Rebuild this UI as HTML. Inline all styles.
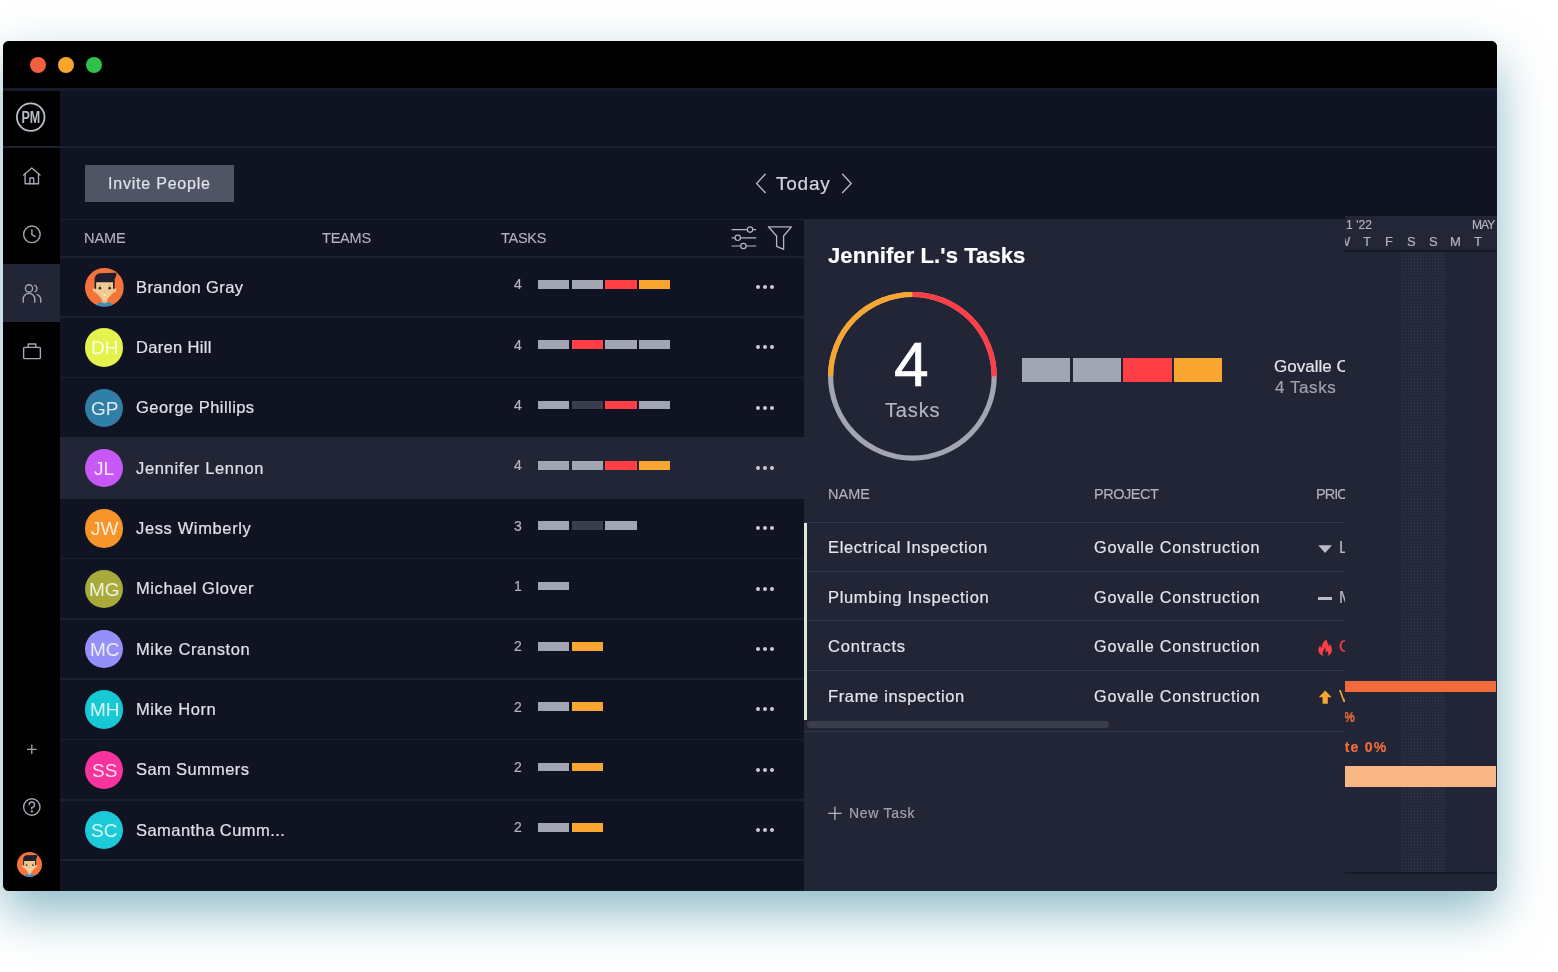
<!DOCTYPE html>
<html lang="en"><head><meta charset="utf-8"><title>Team Workload</title>
<style>
html,body{margin:0;padding:0}
body{width:1558px;height:972px;background:#fff;overflow:hidden;position:relative;font-family:"Liberation Sans", sans-serif}
.abs{position:absolute}
.clip{overflow:hidden}
.t{position:absolute;white-space:pre;line-height:1;font-family:"Liberation Sans", sans-serif;will-change:transform;-webkit-text-stroke:.2px}
.shadow{position:absolute;left:3px;top:41px;width:1494px;height:850px;border-radius:6px;box-shadow:0 21px 50px rgba(62,140,160,.6)}
.win{position:absolute;left:3px;top:41px;width:1494px;height:850px;border-radius:6px;overflow:hidden;background:#101422}
.stage{position:absolute;left:-3px;top:-41px;width:1558px;height:972px}
.wk{background-color:#252838;background-image:radial-gradient(#343747 0.7px,transparent 0.9px);background-size:3px 3px}
</style></head>
<body>
<div class="shadow"></div>
<div class="win"><div class="stage">
<div class="abs" style="left:0;top:41px;width:1558px;height:48px;background:#000"></div>
<div class="abs" style="left:30px;top:57.2px;width:16px;height:16px;border-radius:50%;background:#f4603f"></div>
<div class="abs" style="left:58px;top:57.2px;width:16px;height:16px;border-radius:50%;background:#f8a52b"></div>
<div class="abs" style="left:86px;top:57.2px;width:16px;height:16px;border-radius:50%;background:#2fc14b"></div>
<div class="abs" style="left:0;top:88.4px;width:1558px;height:2.6px;background:#181b2b"></div>
<div class="abs" style="left:0;top:91px;width:60px;height:810px;background:#000"></div>
<div class="abs" style="left:0;top:146px;width:1558px;height:2px;background:#1d2030"></div>
<div class="abs" style="left:0;top:264px;width:60px;height:58px;background:#222535"></div>
<svg class="abs" style="left:14px;top:100px;will-change:transform" width="34" height="34" viewBox="0 0 34 34"><circle cx="16.7" cy="17.1" r="13.8" fill="none" stroke="#b9bcc9" stroke-width="1.8"/><text x="16.8" y="22.9" text-anchor="middle" font-family="Liberation Sans, sans-serif" font-weight="700" font-size="16" textLength="18.8" lengthAdjust="spacingAndGlyphs" fill="#b9bcc9">PM</text></svg>
<svg class="abs" style="left:21px;top:166px" width="22" height="21" viewBox="0 0 22 21" fill="none" stroke="#a3a6b3" stroke-width="1.4" stroke-linejoin="round" stroke-linecap="round"><path d="M2.6 9 L10.8 2 L19 9"/><path d="M4.1 7.8 V17.8 H17.5 V7.8"/><path d="M8.9 17.8 V12 H12.7 V17.8"/></svg>
<svg class="abs" style="left:21px;top:224px" width="22" height="22" viewBox="0 0 22 22" fill="none" stroke="#a3a6b3" stroke-width="1.4" stroke-linecap="round"><circle cx="10.9" cy="10.3" r="8.3"/><path d="M10.9 5.6 V10.6 L14 12.6"/></svg>
<svg class="abs" style="left:21px;top:283px" width="22" height="21" viewBox="0 0 22 21" fill="none" stroke="#a3a6b3" stroke-width="1.4" stroke-linecap="round"><circle cx="8" cy="5.4" r="3.6"/><path d="M2.2 19.2 V16.2 A5.8 5.8 0 0 1 13.8 16.2 V19.2"/><path d="M13.6 2.2 A3.6 3.6 0 0 1 14 8.8"/><path d="M16.2 11.6 A5.6 5.6 0 0 1 19.8 16.6 V19.2"/></svg>
<svg class="abs" style="left:21px;top:342px" width="22" height="19" viewBox="0 0 22 19" fill="none" stroke="#a3a6b3" stroke-width="1.4" stroke-linejoin="round"><rect x="2.6" y="5.4" width="16.8" height="11.2" rx="1"/><path d="M7.2 5.4 V2 H14.8 V5.4"/></svg>
<svg class="abs" style="left:25px;top:743px" width="14" height="14" viewBox="0 0 14 14" fill="none" stroke="#a3a6b3" stroke-width="1.3"><path d="M6.8 1.6 V11 M2 6.3 H11.6"/></svg>
<svg class="abs" style="left:21px;top:796px" width="22" height="22" viewBox="0 0 22 22" fill="none" stroke="#a3a6b3" stroke-width="1.4" stroke-linecap="round"><circle cx="10.8" cy="11" r="8.2"/><path d="M8.2 8.6 A2.7 2.7 0 1 1 10.8 11.4 V12.8"/><circle cx="10.8" cy="15.4" r="0.5" fill="#a3a6b3"/></svg>
<svg class="abs" style="left:17.0px;top:852.3px" width="25" height="25" viewBox="0 0 39 39"><defs><clipPath id="fc29x864"><circle cx="19.5" cy="19.5" r="19.5"/></clipPath></defs><g clip-path="url(#fc29x864)"><rect width="39" height="39" fill="#f4743b"/><path d="M10.4 39 Q11.4 35.2 15.8 34.4 H23.6 Q28 35.2 29.2 39Z" fill="#3a8fc0"/><path d="M16.8 30 H22.6 V34.4 Q19.7 36.6 16.8 34.4Z" fill="#e5b681"/><path d="M8.1 20.4 Q7.2 23.4 10.6 25.2 V20.6Z M31.3 20.4 Q32.2 23.4 28.8 25.2 V20.6Z" fill="#f2cb94"/><path d="M10.6 13.6 H28.8 V24.2 L21 32.6 H18.4 L10.6 24.2Z" fill="#f2cb94"/><path d="M9.6 20.8 V11.4 Q10 6.2 14.6 5.2 L30.4 4.7 Q32 4.8 31.6 6.4 Q31.2 9.4 29.8 11.2 V20.8 H28.2 V14.2 H11.2 V20.8Z" fill="#1f1f2e"/><circle cx="15" cy="20.3" r="1.35" fill="#2b2d3c"/><circle cx="24.8" cy="20.3" r="1.35" fill="#2b2d3c"/><path d="M13.4 17.4 H16.6 M23.2 17.4 H26.4" stroke="#d9a97c" stroke-width="0.9"/><path d="M19.7 21.6 V25 H21.2" fill="none" stroke="#e7b583" stroke-width="0.7"/><path d="M17.9 26.4 H21.7 Q19.8 29.2 17.9 26.4Z" fill="#fdf6ee"/></g></svg>
<div class="abs" style="left:84.5px;top:165px;width:149.3px;height:36.7px;background:#505566"></div>
<div class="t" style="top:176px;font-size:16px;color:#e0e1e6;letter-spacing:0.790px;left:108.10px;">Invite People</div>
<svg class="abs" style="left:753px;top:171px" width="16" height="25" viewBox="0 0 16 25" fill="none" stroke="#b4b7c3" stroke-width="1.4"><path d="M12.6 2.8 L3.6 12.4 L12.6 22"/></svg>
<svg class="abs" style="left:839px;top:171px" width="16" height="25" viewBox="0 0 16 25" fill="none" stroke="#b4b7c3" stroke-width="1.4"><path d="M3.2 2.8 L12.2 12.4 L3.2 22"/></svg>
<div class="t" style="top:174px;font-size:19px;color:#d3d5dd;letter-spacing:0.749px;left:776.20px;">Today</div>
<div class="abs" style="left:60px;top:218.6px;width:744px;height:1.5px;background:#1c2030"></div>
<div class="t" style="top:231px;font-size:14.5px;color:#b0b3be;letter-spacing:-0.035px;left:84.30px;-webkit-text-stroke:.12px;">NAME</div>
<div class="t" style="top:231px;font-size:14.5px;color:#b0b3be;letter-spacing:-0.213px;left:322.40px;-webkit-text-stroke:.12px;">TEAMS</div>
<div class="t" style="top:231px;font-size:14.5px;color:#b0b3be;letter-spacing:-0.267px;left:500.80px;-webkit-text-stroke:.12px;">TASKS</div>
<svg class="abs" style="left:730px;top:224px" width="28" height="28" viewBox="0 0 28 28" fill="none" stroke="#b4b7c3" stroke-width="1.2"><path d="M1.6 5.6 H17.3 M22.7 5.6 H26.2"/><circle cx="20" cy="5.6" r="2.7"/><path d="M1.6 13.8 H5.1 M10.5 13.8 H26.2"/><circle cx="7.8" cy="13.8" r="2.7"/><path d="M1.6 22 H10.7 M16.1 22 H26.2"/><circle cx="13.4" cy="22" r="2.7"/></svg>
<svg class="abs" style="left:766px;top:224px" width="28" height="28" viewBox="0 0 28 28" fill="none" stroke="#b4b7c3" stroke-width="1.3" stroke-linejoin="round"><path d="M2.4 2.8 H25.4 L17.6 12 V25.4 L10.6 22.4 V12 Z"/></svg>
<div class="abs" style="left:60px;top:436.8px;width:744px;height:62.5px;background:#222535"></div>
<div class="abs" style="left:60px;top:256.0px;width:744px;height:1.6px;background:#1c2030"></div>
<svg class="abs" style="left:84.8px;top:267.8px" width="38.8" height="38.8" viewBox="0 0 39 39"><defs><clipPath id="fc104x287"><circle cx="19.5" cy="19.5" r="19.5"/></clipPath></defs><g clip-path="url(#fc104x287)"><rect width="39" height="39" fill="#f4743b"/><path d="M10.4 39 Q11.4 35.2 15.8 34.4 H23.6 Q28 35.2 29.2 39Z" fill="#3a8fc0"/><path d="M16.8 30 H22.6 V34.4 Q19.7 36.6 16.8 34.4Z" fill="#e5b681"/><path d="M8.1 20.4 Q7.2 23.4 10.6 25.2 V20.6Z M31.3 20.4 Q32.2 23.4 28.8 25.2 V20.6Z" fill="#f2cb94"/><path d="M10.6 13.6 H28.8 V24.2 L21 32.6 H18.4 L10.6 24.2Z" fill="#f2cb94"/><path d="M9.6 20.8 V11.4 Q10 6.2 14.6 5.2 L30.4 4.7 Q32 4.8 31.6 6.4 Q31.2 9.4 29.8 11.2 V20.8 H28.2 V14.2 H11.2 V20.8Z" fill="#1f1f2e"/><circle cx="15" cy="20.3" r="1.35" fill="#2b2d3c"/><circle cx="24.8" cy="20.3" r="1.35" fill="#2b2d3c"/><path d="M13.4 17.4 H16.6 M23.2 17.4 H26.4" stroke="#d9a97c" stroke-width="0.9"/><path d="M19.7 21.6 V25 H21.2" fill="none" stroke="#e7b583" stroke-width="0.7"/><path d="M17.9 26.4 H21.7 Q19.8 29.2 17.9 26.4Z" fill="#fdf6ee"/></g></svg>
<div class="t" style="top:279px;font-size:16.5px;color:#dfe1e7;letter-spacing:0.388px;left:135.90px;">Brandon Gray</div>
<div class="t" style="top:277px;font-size:14px;color:#b3b6c0;left:513.50px;">4</div>
<div class="abs" style="left:537.6px;top:280.1px;width:31.4px;height:8.7px;background:#a2a6b3"></div>
<div class="abs" style="left:571.7px;top:280.1px;width:31.4px;height:8.7px;background:#a2a6b3"></div>
<div class="abs" style="left:605.4px;top:280.1px;width:31.4px;height:8.7px;background:#ff3e45"></div>
<div class="abs" style="left:638.9px;top:280.1px;width:31.4px;height:8.7px;background:#f8a62f"></div>
<div class="abs" style="left:755.7px;top:284.9px;width:4px;height:4px;border-radius:50%;background:#c9cbd4"></div>
<div class="abs" style="left:763.0px;top:284.9px;width:4px;height:4px;border-radius:50%;background:#c9cbd4"></div>
<div class="abs" style="left:770.3px;top:284.9px;width:4px;height:4px;border-radius:50%;background:#c9cbd4"></div>
<div class="abs" style="left:60px;top:316.3px;width:744px;height:1.6px;background:#1c2030"></div>
<div class="abs" style="left:85.1px;top:328.4px;width:38.4px;height:38.4px;border-radius:50%;background:#e4f24d"></div>
<div class="t" style="top:338px;font-size:19px;color:rgba(255,255,255,.84);left:90.57px;-webkit-text-stroke:0;">DH</div>
<div class="t" style="top:339px;font-size:16.5px;color:#dfe1e7;letter-spacing:0.329px;left:135.90px;">Daren Hill</div>
<div class="t" style="top:338px;font-size:14px;color:#b3b6c0;left:513.50px;">4</div>
<div class="abs" style="left:537.6px;top:340.4px;width:31.4px;height:8.7px;background:#a2a6b3"></div>
<div class="abs" style="left:571.7px;top:340.4px;width:31.4px;height:8.7px;background:#ff3e45"></div>
<div class="abs" style="left:605.4px;top:340.4px;width:31.4px;height:8.7px;background:#a2a6b3"></div>
<div class="abs" style="left:638.9px;top:340.4px;width:31.4px;height:8.7px;background:#a2a6b3"></div>
<div class="abs" style="left:755.7px;top:345.2px;width:4px;height:4px;border-radius:50%;background:#c9cbd4"></div>
<div class="abs" style="left:763.0px;top:345.2px;width:4px;height:4px;border-radius:50%;background:#c9cbd4"></div>
<div class="abs" style="left:770.3px;top:345.2px;width:4px;height:4px;border-radius:50%;background:#c9cbd4"></div>
<div class="abs" style="left:60px;top:376.7px;width:744px;height:1.6px;background:#1c2030"></div>
<div class="abs" style="left:85.1px;top:388.7px;width:38.4px;height:38.4px;border-radius:50%;background:#2f7fa6"></div>
<div class="t" style="top:399px;font-size:19px;color:rgba(255,255,255,.84);left:90.57px;-webkit-text-stroke:0;">GP</div>
<div class="t" style="top:399px;font-size:16.5px;color:#dfe1e7;letter-spacing:0.444px;left:135.90px;">George Phillips</div>
<div class="t" style="top:398px;font-size:14px;color:#b3b6c0;left:513.50px;">4</div>
<div class="abs" style="left:537.6px;top:400.8px;width:31.4px;height:8.7px;background:#a2a6b3"></div>
<div class="abs" style="left:571.7px;top:400.8px;width:31.4px;height:8.7px;background:#3b3e4c"></div>
<div class="abs" style="left:605.4px;top:400.8px;width:31.4px;height:8.7px;background:#ff3e45"></div>
<div class="abs" style="left:638.9px;top:400.8px;width:31.4px;height:8.7px;background:#a2a6b3"></div>
<div class="abs" style="left:755.7px;top:405.6px;width:4px;height:4px;border-radius:50%;background:#c9cbd4"></div>
<div class="abs" style="left:763.0px;top:405.6px;width:4px;height:4px;border-radius:50%;background:#c9cbd4"></div>
<div class="abs" style="left:770.3px;top:405.6px;width:4px;height:4px;border-radius:50%;background:#c9cbd4"></div>
<div class="abs" style="left:85.1px;top:449.1px;width:38.4px;height:38.4px;border-radius:50%;background:#c758f5"></div>
<div class="t" style="top:459px;font-size:19px;color:rgba(255,255,255,.84);left:94.26px;-webkit-text-stroke:0;">JL</div>
<div class="t" style="top:460px;font-size:16.5px;color:#dfe1e7;letter-spacing:0.653px;left:135.90px;">Jennifer Lennon</div>
<div class="t" style="top:458px;font-size:14px;color:#b3b6c0;left:513.50px;">4</div>
<div class="abs" style="left:537.6px;top:461.1px;width:31.4px;height:8.7px;background:#a2a6b3"></div>
<div class="abs" style="left:571.7px;top:461.1px;width:31.4px;height:8.7px;background:#a2a6b3"></div>
<div class="abs" style="left:605.4px;top:461.1px;width:31.4px;height:8.7px;background:#ff3e45"></div>
<div class="abs" style="left:638.9px;top:461.1px;width:31.4px;height:8.7px;background:#f8a62f"></div>
<div class="abs" style="left:755.7px;top:465.9px;width:4px;height:4px;border-radius:50%;background:#c9cbd4"></div>
<div class="abs" style="left:763.0px;top:465.9px;width:4px;height:4px;border-radius:50%;background:#c9cbd4"></div>
<div class="abs" style="left:770.3px;top:465.9px;width:4px;height:4px;border-radius:50%;background:#c9cbd4"></div>
<div class="abs" style="left:85.1px;top:509.4px;width:38.4px;height:38.4px;border-radius:50%;background:#f7942a"></div>
<div class="t" style="top:519px;font-size:19px;color:rgba(255,255,255,.84);left:90.58px;-webkit-text-stroke:0;">JW</div>
<div class="t" style="top:520px;font-size:16.5px;color:#dfe1e7;letter-spacing:0.628px;left:135.90px;">Jess Wimberly</div>
<div class="t" style="top:519px;font-size:14px;color:#b3b6c0;left:513.50px;">3</div>
<div class="abs" style="left:537.6px;top:521.4px;width:31.4px;height:8.7px;background:#a2a6b3"></div>
<div class="abs" style="left:571.7px;top:521.4px;width:31.4px;height:8.7px;background:#3b3e4c"></div>
<div class="abs" style="left:605.4px;top:521.4px;width:31.4px;height:8.7px;background:#a2a6b3"></div>
<div class="abs" style="left:755.7px;top:526.2px;width:4px;height:4px;border-radius:50%;background:#c9cbd4"></div>
<div class="abs" style="left:763.0px;top:526.2px;width:4px;height:4px;border-radius:50%;background:#c9cbd4"></div>
<div class="abs" style="left:770.3px;top:526.2px;width:4px;height:4px;border-radius:50%;background:#c9cbd4"></div>
<div class="abs" style="left:60px;top:557.6px;width:744px;height:1.6px;background:#1c2030"></div>
<div class="abs" style="left:85.1px;top:569.7px;width:38.4px;height:38.4px;border-radius:50%;background:#a8ab3c"></div>
<div class="t" style="top:580px;font-size:19px;color:rgba(255,255,255,.84);left:89.00px;-webkit-text-stroke:0;">MG</div>
<div class="t" style="top:580px;font-size:16.5px;color:#dfe1e7;letter-spacing:0.573px;left:135.90px;">Michael Glover</div>
<div class="t" style="top:579px;font-size:14px;color:#b3b6c0;left:513.50px;">1</div>
<div class="abs" style="left:537.6px;top:581.8px;width:31.4px;height:8.7px;background:#a2a6b3"></div>
<div class="abs" style="left:755.7px;top:586.5px;width:4px;height:4px;border-radius:50%;background:#c9cbd4"></div>
<div class="abs" style="left:763.0px;top:586.5px;width:4px;height:4px;border-radius:50%;background:#c9cbd4"></div>
<div class="abs" style="left:770.3px;top:586.5px;width:4px;height:4px;border-radius:50%;background:#c9cbd4"></div>
<div class="abs" style="left:60px;top:618.0px;width:744px;height:1.6px;background:#1c2030"></div>
<div class="abs" style="left:85.1px;top:630.0px;width:38.4px;height:38.4px;border-radius:50%;background:#9490f8"></div>
<div class="t" style="top:640px;font-size:19px;color:rgba(255,255,255,.84);left:89.52px;-webkit-text-stroke:0;">MC</div>
<div class="t" style="top:641px;font-size:16.5px;color:#dfe1e7;letter-spacing:0.610px;left:135.90px;">Mike Cranston</div>
<div class="t" style="top:639px;font-size:14px;color:#b3b6c0;left:513.50px;">2</div>
<div class="abs" style="left:537.6px;top:642.1px;width:31.4px;height:8.7px;background:#a2a6b3"></div>
<div class="abs" style="left:571.7px;top:642.1px;width:31.4px;height:8.7px;background:#f8a62f"></div>
<div class="abs" style="left:755.7px;top:646.9px;width:4px;height:4px;border-radius:50%;background:#c9cbd4"></div>
<div class="abs" style="left:763.0px;top:646.9px;width:4px;height:4px;border-radius:50%;background:#c9cbd4"></div>
<div class="abs" style="left:770.3px;top:646.9px;width:4px;height:4px;border-radius:50%;background:#c9cbd4"></div>
<div class="abs" style="left:60px;top:678.3px;width:744px;height:1.6px;background:#1c2030"></div>
<div class="abs" style="left:85.1px;top:690.4px;width:38.4px;height:38.4px;border-radius:50%;background:#17c9d4"></div>
<div class="t" style="top:700px;font-size:19px;color:rgba(255,255,255,.84);left:89.52px;-webkit-text-stroke:0;">MH</div>
<div class="t" style="top:701px;font-size:16.5px;color:#dfe1e7;letter-spacing:0.552px;left:135.90px;">Mike Horn</div>
<div class="t" style="top:700px;font-size:14px;color:#b3b6c0;left:513.50px;">2</div>
<div class="abs" style="left:537.6px;top:702.4px;width:31.4px;height:8.7px;background:#a2a6b3"></div>
<div class="abs" style="left:571.7px;top:702.4px;width:31.4px;height:8.7px;background:#f8a62f"></div>
<div class="abs" style="left:755.7px;top:707.2px;width:4px;height:4px;border-radius:50%;background:#c9cbd4"></div>
<div class="abs" style="left:763.0px;top:707.2px;width:4px;height:4px;border-radius:50%;background:#c9cbd4"></div>
<div class="abs" style="left:770.3px;top:707.2px;width:4px;height:4px;border-radius:50%;background:#c9cbd4"></div>
<div class="abs" style="left:60px;top:738.6px;width:744px;height:1.6px;background:#1c2030"></div>
<div class="abs" style="left:85.1px;top:750.7px;width:38.4px;height:38.4px;border-radius:50%;background:#f7339d"></div>
<div class="t" style="top:761px;font-size:19px;color:rgba(255,255,255,.84);left:91.62px;-webkit-text-stroke:0;">SS</div>
<div class="t" style="top:761px;font-size:16.5px;color:#dfe1e7;letter-spacing:0.379px;left:135.90px;">Sam Summers</div>
<div class="t" style="top:760px;font-size:14px;color:#b3b6c0;left:513.50px;">2</div>
<div class="abs" style="left:537.6px;top:762.7px;width:31.4px;height:8.7px;background:#a2a6b3"></div>
<div class="abs" style="left:571.7px;top:762.7px;width:31.4px;height:8.7px;background:#f8a62f"></div>
<div class="abs" style="left:755.7px;top:767.5px;width:4px;height:4px;border-radius:50%;background:#c9cbd4"></div>
<div class="abs" style="left:763.0px;top:767.5px;width:4px;height:4px;border-radius:50%;background:#c9cbd4"></div>
<div class="abs" style="left:770.3px;top:767.5px;width:4px;height:4px;border-radius:50%;background:#c9cbd4"></div>
<div class="abs" style="left:60px;top:799.0px;width:744px;height:1.6px;background:#1c2030"></div>
<div class="abs" style="left:85.1px;top:811.0px;width:38.4px;height:38.4px;border-radius:50%;background:#1ccad8"></div>
<div class="t" style="top:821px;font-size:19px;color:rgba(255,255,255,.84);left:91.10px;-webkit-text-stroke:0;">SC</div>
<div class="t" style="top:822px;font-size:16.5px;color:#dfe1e7;letter-spacing:0.451px;left:135.90px;">Samantha Cumm...</div>
<div class="t" style="top:820px;font-size:14px;color:#b3b6c0;left:513.50px;">2</div>
<div class="abs" style="left:537.6px;top:823.1px;width:31.4px;height:8.7px;background:#a2a6b3"></div>
<div class="abs" style="left:571.7px;top:823.1px;width:31.4px;height:8.7px;background:#f8a62f"></div>
<div class="abs" style="left:755.7px;top:827.9px;width:4px;height:4px;border-radius:50%;background:#c9cbd4"></div>
<div class="abs" style="left:763.0px;top:827.9px;width:4px;height:4px;border-radius:50%;background:#c9cbd4"></div>
<div class="abs" style="left:770.3px;top:827.9px;width:4px;height:4px;border-radius:50%;background:#c9cbd4"></div>
<div class="abs" style="left:60px;top:859.3px;width:744px;height:1.6px;background:#1c2030"></div>
<div class="abs" style="left:804px;top:218.8px;width:760px;height:700px;background:#222535"></div>
<div class="t" style="top:245px;font-size:22px;color:#ffffff;font-weight:700;letter-spacing:0.096px;left:827.90px;">Jennifer L.'s Tasks</div>
<svg class="abs" style="left:822px;top:286px" width="180" height="180" viewBox="0 0 180 180" fill="none" stroke-width="5.2"><circle cx="90.4" cy="90.3" r="81.8" stroke="#a2a6b3"/><path d="M8.6 90.3 A81.8 81.8 0 0 1 90.4 8.5" stroke="#f8a62f"/><path d="M90.4 8.5 A81.8 81.8 0 0 1 172.2 90.3" stroke="#ff3e45"/></svg>
<div class="t" style="top:334px;font-size:62.3px;color:#ffffff;left:894.47px;-webkit-text-stroke:0.7px #fff;">4</div>
<div class="t" style="top:400px;font-size:20px;color:#b3b6c0;letter-spacing:0.844px;left:884.60px;">Tasks</div>
<div class="abs" style="left:1022.0px;top:357.5px;width:48.4px;height:24.4px;background:#a2a6b3"></div>
<div class="abs" style="left:1072.7px;top:357.5px;width:48.4px;height:24.4px;background:#a2a6b3"></div>
<div class="abs" style="left:1123.4px;top:357.5px;width:48.4px;height:24.4px;background:#ff3e45"></div>
<div class="abs" style="left:1174.1px;top:357.5px;width:48.4px;height:24.4px;background:#f8a62f"></div>
<div class="abs clip" style="left:1270px;top:340px;width:74.8px;height:70px">
<div class="t" style="top:18px;font-size:17px;color:#e3e5ea;letter-spacing:0.027px;left:4.30px;">Govalle Construction</div>
<div class="t" style="top:39px;font-size:17px;color:#a0a3af;letter-spacing:0.562px;left:4.90px;">4 Tasks</div>
</div>
<div class="t" style="top:487px;font-size:14.5px;color:#b0b3be;letter-spacing:0.031px;left:827.70px;-webkit-text-stroke:.12px;">NAME</div>
<div class="t" style="top:487px;font-size:14.5px;color:#b0b3be;letter-spacing:-0.479px;left:1093.70px;-webkit-text-stroke:.12px;">PROJECT</div>
<div class="abs clip" style="left:1310px;top:480px;width:34.8px;height:240px">
<div class="t" style="top:7px;font-size:14.5px;color:#b0b3be;letter-spacing:-0.936px;left:5.90px;-webkit-text-stroke:.12px;">PRIORITY</div>
<div class="t" style="top:60px;font-size:16px;color:#b4b7c2;left:28.90px;">Low</div>
<div class="t" style="top:110px;font-size:16px;color:#b4b7c2;left:28.90px;">Medium</div>
<div class="t" style="top:159px;font-size:16px;color:#ff3e45;left:28.90px;">Critical</div>
<div class="t" style="top:209px;font-size:16px;color:#f8a62f;left:28.90px;">Very High</div>
</div>
<div class="abs" style="left:804px;top:521.6px;width:540.5px;height:1.3px;background:#34374a"></div>
<div class="abs" style="left:804px;top:570.9px;width:540.5px;height:1.3px;background:#34374a"></div>
<div class="abs" style="left:804px;top:620.2px;width:540.5px;height:1.3px;background:#34374a"></div>
<div class="abs" style="left:804px;top:669.5px;width:540.5px;height:1.3px;background:#34374a"></div>
<div class="t" style="top:539px;font-size:16.5px;color:#e3e5ea;letter-spacing:0.622px;left:827.70px;">Electrical Inspection</div>
<div class="t" style="top:539px;font-size:16.2px;color:#e3e5ea;letter-spacing:0.802px;left:1093.50px;">Govalle Construction</div>
<div class="t" style="top:589px;font-size:16.5px;color:#e3e5ea;letter-spacing:0.673px;left:827.70px;">Plumbing Inspection</div>
<div class="t" style="top:589px;font-size:16.2px;color:#e3e5ea;letter-spacing:0.802px;left:1093.50px;">Govalle Construction</div>
<div class="t" style="top:638px;font-size:16.5px;color:#e3e5ea;letter-spacing:0.811px;left:827.70px;">Contracts</div>
<div class="t" style="top:638px;font-size:16.2px;color:#e3e5ea;letter-spacing:0.802px;left:1093.50px;">Govalle Construction</div>
<div class="t" style="top:688px;font-size:16.5px;color:#e3e5ea;letter-spacing:0.649px;left:827.70px;">Frame inspection</div>
<div class="t" style="top:688px;font-size:16.2px;color:#e3e5ea;letter-spacing:0.802px;left:1093.50px;">Govalle Construction</div>
<div class="abs" style="left:803.6px;top:522.8px;width:3.6px;height:197px;background:#dfe7dc"></div>
<div class="abs" style="left:807.3px;top:721.2px;width:301.4px;height:6.8px;border-radius:3.4px;background:#3a3d4c"></div>
<div class="abs" style="left:804px;top:731.2px;width:540.5px;height:1.3px;background:#34374a"></div>
<svg class="abs" style="left:1317px;top:542px" width="16" height="12" viewBox="0 0 16 12"><path d="M1.2 3.2 H15 L8.1 11Z" fill="#b9bcc7"/></svg>
<div class="abs" style="left:1318.2px;top:596.8px;width:13.6px;height:2.9px;background:#b9bcc7"></div>
<svg class="abs" style="left:1317px;top:639px" width="16" height="18" viewBox="0 0 16 18"><path d="M9.4 0.6 C10 3.6 11.4 5 12 7.4 C12.6 6.6 12.8 5.8 12.8 4.8 C14.4 7 15.2 9.4 14.8 12 C14.4 14.6 12.6 16.4 10.6 16.9 C11.6 15.4 11.6 13.6 10.4 12.2 C9.6 13.2 9 13.4 8.4 13 C9.2 11.6 8.8 9.8 7.6 8.6 C7.6 10.6 6.4 11.6 5.8 12.8 C5.2 14.2 5.6 15.8 6.6 16.9 C4 16.4 1.6 14.4 1.4 11.4 C1.2 9.2 2.2 7.6 3.2 6.4 C3.4 7.6 3.8 8.4 4.6 9 C4.6 5.6 6.4 2.4 9.4 0.6Z" fill="#ff3e45"/></svg>
<svg class="abs" style="left:1317px;top:689px" width="16" height="16" viewBox="0 0 16 16"><path d="M8.2 1.6 L14.6 8.2 H10.8 V14.8 H5.6 V8.2 H1.8Z" fill="#f8a62f"/></svg>
<svg class="abs" style="left:827px;top:805px" width="16" height="16" viewBox="0 0 16 16" fill="none" stroke="#b3b6c0" stroke-width="1.3"><path d="M7.9 1.7 V15.1 M1.2 8.4 H14.6"/></svg>
<div class="t" style="top:806px;font-size:14px;color:#a0a3af;letter-spacing:0.737px;left:848.50px;">New Task</div>
<div class="abs clip" style="left:1344.8px;top:216px;width:160px;height:680px;background:#222535">
<div class="abs" style="left:0;top:0;width:160px;height:34px;background:#232636"></div>
<div class="abs" style="left:0;top:34px;width:160px;height:2px;background:#141726"></div>
<div class="abs wk" style="left:56px;top:36px;width:44.5px;height:620px"></div>
<div class="abs" style="left:0;top:656px;width:160px;height:1.6px;background:#161928"></div>
<div class="t" style="top:3px;font-size:12px;color:#b0b3be;letter-spacing:0.061px;left:1.70px;">1 '22</div>
<div class="t" style="top:3px;font-size:12px;color:#b0b3be;letter-spacing:-0.912px;left:127.00px;">MAY 8 '22</div>
<div class="t" style="top:19px;font-size:13px;color:#b0b3be;left:-6.74px;">W</div>
<div class="t" style="top:19px;font-size:13px;color:#b0b3be;left:17.72px;">T</div>
<div class="t" style="top:19px;font-size:13px;color:#b0b3be;left:40.02px;">F</div>
<div class="t" style="top:19px;font-size:13px;color:#b0b3be;left:61.96px;">S</div>
<div class="t" style="top:19px;font-size:13px;color:#b0b3be;left:84.26px;">S</div>
<div class="t" style="top:19px;font-size:13px;color:#b0b3be;left:105.48px;">M</div>
<div class="t" style="top:19px;font-size:13px;color:#b0b3be;left:129.22px;">T</div>
<div class="abs" style="left:0;top:464.6px;width:151.2px;height:11.5px;background:#f26b3a"></div>
<div class="abs" style="left:0;top:550.3px;width:151.2px;height:21px;background:#f8b784"></div>
<div class="t" style="top:494px;font-size:14.2px;color:#ee6f3d;font-weight:700;left:-0.60px;transform:scaleX(.86);transform-origin:0 0;">%</div>
<div class="t" style="top:524px;font-size:14px;color:#ee6f3d;font-weight:700;letter-spacing:1.230px;left:-58.83px;">Complete 0%</div>
</div>
</div></div>
</body></html>
